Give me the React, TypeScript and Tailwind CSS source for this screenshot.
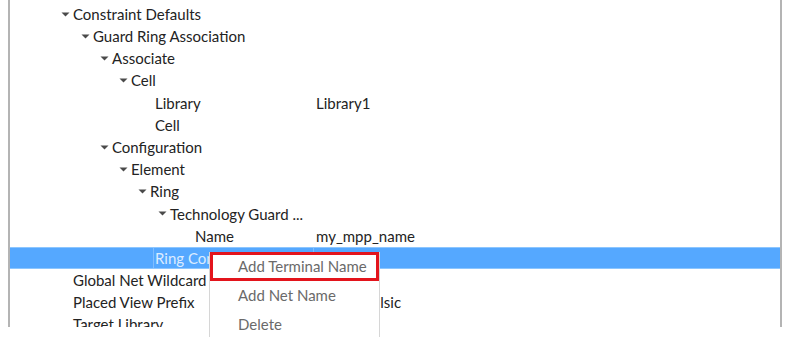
import React from 'react'

type Row = {
  label: string
  indent: number
  open?: boolean
  value?: string
  selected?: boolean
}

const rows: Row[] = [
  { label: 'Constraint Defaults', indent: 61, open: true },
  { label: 'Guard Ring Association', indent: 81, open: true },
  { label: 'Associate', indent: 100, open: true },
  { label: 'Cell', indent: 119, open: true },
  { label: 'Library', indent: 155, value: 'Library1' },
  { label: 'Cell', indent: 155 },
  { label: 'Configuration', indent: 100, open: true },
  { label: 'Element', indent: 119, open: true },
  { label: 'Ring', indent: 138, open: true },
  { label: 'Technology Guard ...', indent: 158, open: true },
  { label: 'Name', indent: 195, value: 'my_mpp_name' },
  { label: 'Ring Constraint', indent: 155, selected: true },
  { label: 'Global Net Wildcard', indent: 73 },
  { label: 'Placed View Prefix', indent: 73, value: 'placed_v_lsic' },
  { label: 'Target Library', indent: 73 },
]

function Caret() {
  return (
    <svg width="9" height="5" viewBox="0 0 9 5" className="mr-[3px] shrink-0">
      <path d="M0.5 0.5 L8.5 0.5 L4.5 4.5 Z" fill="#4a4a4a" />
    </svg>
  )
}

function TreeRow({ row }: { row: Row }) {
  return (
    <div
      className={`relative flex h-[22.2px] items-center ${
        row.selected ? 'border-y border-[#8cc6ff] bg-[#55a8ff] text-[#dcecff]' : 'text-[#232323]'
      }`}
    >
      <div className="flex h-full w-[306px] shrink-0 items-center" style={{ paddingLeft: row.indent - 10 }}>
        {row.open && <Caret />}
        {row.selected ? (
          <span className="-ml-[2px] flex h-full items-center whitespace-nowrap border-l border-[#80bdff] pl-[1px]">
            {row.label}
          </span>
        ) : (
          <span className="whitespace-nowrap">{row.label}</span>
        )}
      </div>
      {row.selected && <span className="-ml-[3px] h-full border-l border-[#80bdff]" />}
      {row.value && <span className="whitespace-nowrap">{row.value}</span>}
    </div>
  )
}

export default function App() {
  return (
    <div className="relative h-[337px] w-[790px] overflow-hidden bg-white font-['Lato','Liberation_Sans',sans-serif] text-[15px]">
      <div className="mx-[8px] h-[327px] overflow-hidden border-x-2 border-[#b4b4b4] pt-[3px]">
        {rows.map((r, i) => (
          <TreeRow key={i} row={r} />
        ))}
      </div>

      <div className="absolute left-[209px] top-[252px] w-[171px] border-x border-[#d6d6d6] bg-white text-[#6a6a6a]">
        <div className="flex h-[29px] items-center border-[3px] border-[#e3141c] pl-[25px]">Add Terminal Name</div>
        <div className="flex h-[29px] items-center pl-[28px]">Add Net Name</div>
        <div className="flex h-[29px] items-center pl-[28px]">Delete</div>
      </div>
    </div>
  )
}
